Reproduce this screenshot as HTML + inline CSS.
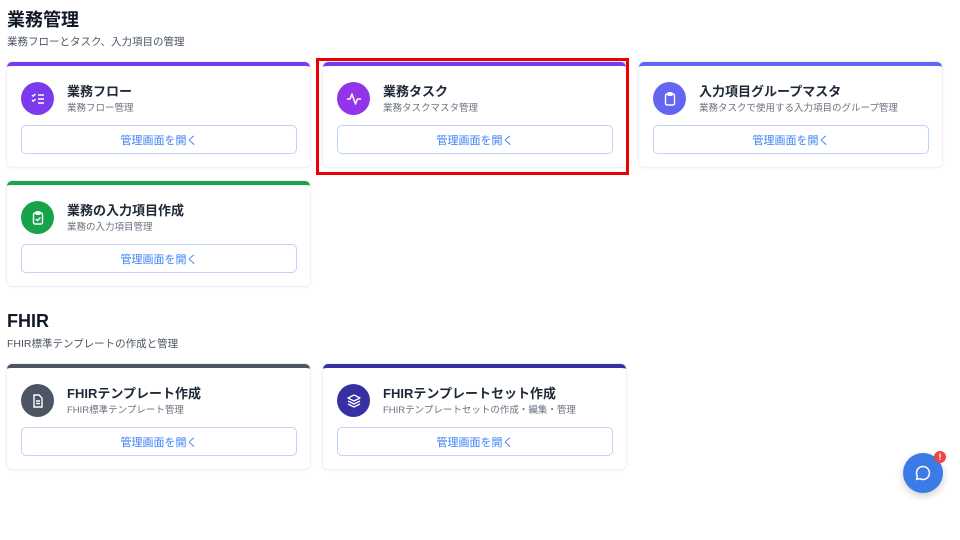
<!DOCTYPE html>
<html><head><meta charset="utf-8"><style>
*{box-sizing:border-box;margin:0;padding:0}
body{width:960px;height:540px;background:#fff;font-family:"Liberation Sans","Noto Sans CJK JP",sans-serif;position:relative;overflow:hidden;color:#1f2937}
.h{position:absolute;left:7px;font-size:18px;font-weight:700;color:#111827}
.s{position:absolute;left:7px;font-size:10.5px;color:#4b5563}
.card{position:absolute;width:303px;height:105px;background:#fff;border-radius:5px;box-shadow:0 0 0 1px #eef0f3,0 1px 3px rgba(0,0,0,.06);border-top:4px solid #7c3aed;overflow:hidden}
.ic{position:absolute;left:14px;top:16px;width:33px;height:33px;border-radius:50%;display:flex;align-items:center;justify-content:center}
.t{position:absolute;left:60px;top:15px;font-size:13px;font-weight:700;color:#1f2937}
.d{position:absolute;left:60px;top:34px;font-size:9.5px;color:#6b7280}
.b{position:absolute;left:14px;top:59px;width:276px;height:29px;border:1px solid #bfd3f5;border-radius:5px;color:#3b82f6;font-size:11px;display:flex;align-items:center;justify-content:center}
</style></head><body>
<div class="h" style="top:6px">業務管理</div>
<div class="s" style="top:34px">業務フローとタスク、入力項目の管理</div>

<div class="card" style="left:7px;top:62px;border-top-color:#7c3aed">
<div class="ic" style="background:#7c3aed"><svg width="16" height="16" viewBox="0 0 16 16" fill="none" stroke="#fff" stroke-width="1.4"><path d="M2 4l1.2 1.2L5.5 3M2 9l1.2 1.2L5.5 8M8 4h6M8 8h6M8 12h6"/></svg></div>
<div class="t">業務フロー</div><div class="d">業務フロー管理</div><div class="b">管理画面を開く</div></div>

<div class="card" style="left:323px;top:62px;border-top-color:#7c3aed">
<div class="ic" style="background:#9333ea"><svg width="16" height="16" viewBox="0 0 16 16" fill="none" stroke="#fff" stroke-width="1.5" stroke-linejoin="round" stroke-linecap="round"><path d="M1.5 8h2.5l2-5 3.5 10 2-5h3"/></svg></div>
<div class="t">業務タスク</div><div class="d">業務タスクマスタ管理</div><div class="b">管理画面を開く</div></div>

<div class="card" style="left:639px;top:62px;border-top-color:#6366f1">
<div class="ic" style="background:#6366f1"><svg width="16" height="16" viewBox="0 0 16 16" fill="none" stroke="#fff" stroke-width="1.4"><rect x="3.5" y="3" width="9" height="11" rx="1.5"/><rect x="6" y="1.8" width="4" height="2.4" rx=".6"/></svg></div>
<div class="t">入力項目グループマスタ</div><div class="d">業務タスクで使用する入力項目のグループ管理</div><div class="b">管理画面を開く</div></div>

<div class="card" style="left:7px;top:181px;border-top-color:#16a34a">
<div class="ic" style="background:#16a34a"><svg width="16" height="16" viewBox="0 0 16 16" fill="none" stroke="#fff" stroke-width="1.4"><rect x="3.5" y="3" width="9" height="11" rx="1.5"/><rect x="6" y="1.8" width="4" height="2.4" rx=".6"/><path d="M5.8 9l1.6 1.6 3-3"/></svg></div>
<div class="t">業務の入力項目作成</div><div class="d">業務の入力項目管理</div><div class="b">管理画面を開く</div></div>

<div style="position:absolute;left:316px;top:58px;width:313px;height:117px;border:3px solid #ee0000"></div>

<div class="h" style="top:311px">FHIR</div>
<div class="s" style="top:336px">FHIR標準テンプレートの作成と管理</div>

<div class="card" style="left:7px;top:364px;border-top-color:#4b5563">
<div class="ic" style="background:#4b5563"><svg width="16" height="16" viewBox="0 0 16 16" fill="none" stroke="#fff" stroke-width="1.4"><path d="M4 2h5l3 3v9H4z"/><path d="M6 8h4M6 10.5h4"/></svg></div>
<div class="t">FHIRテンプレート作成</div><div class="d">FHIR標準テンプレート管理</div><div class="b">管理画面を開く</div></div>

<div class="card" style="left:323px;top:364px;border-top-color:#3730a3">
<div class="ic" style="background:#3730a3"><svg width="16" height="16" viewBox="0 0 16 16" fill="none" stroke="#fff" stroke-width="1.3" stroke-linejoin="round"><path d="M8 2l6 3-6 3-6-3z"/><path d="M2 8l6 3 6-3M2 11l6 3 6-3"/></svg></div>
<div class="t">FHIRテンプレートセット作成</div><div class="d">FHIRテンプレートセットの作成・編集・管理</div><div class="b">管理画面を開く</div></div>

<div style="position:absolute;left:903px;top:453px;width:40px;height:40px;border-radius:50%;background:#3b7be8;box-shadow:0 3px 8px rgba(0,0,0,.2);display:flex;align-items:center;justify-content:center"><svg width="18" height="18" viewBox="0 0 18 18" fill="none" stroke="#fff" stroke-width="1.5" stroke-linejoin="round"><path d="M9 2.5a6.5 6.5 0 1 1-3.2 12.2L2.5 15.5l.9-3.2A6.5 6.5 0 0 1 9 2.5z"/></svg></div>
<div style="position:absolute;left:934px;top:451px;width:12px;height:12px;border-radius:50%;background:#ef4444;color:#fff;font-size:9px;font-weight:700;text-align:center;line-height:12px">!</div>
</body></html>
